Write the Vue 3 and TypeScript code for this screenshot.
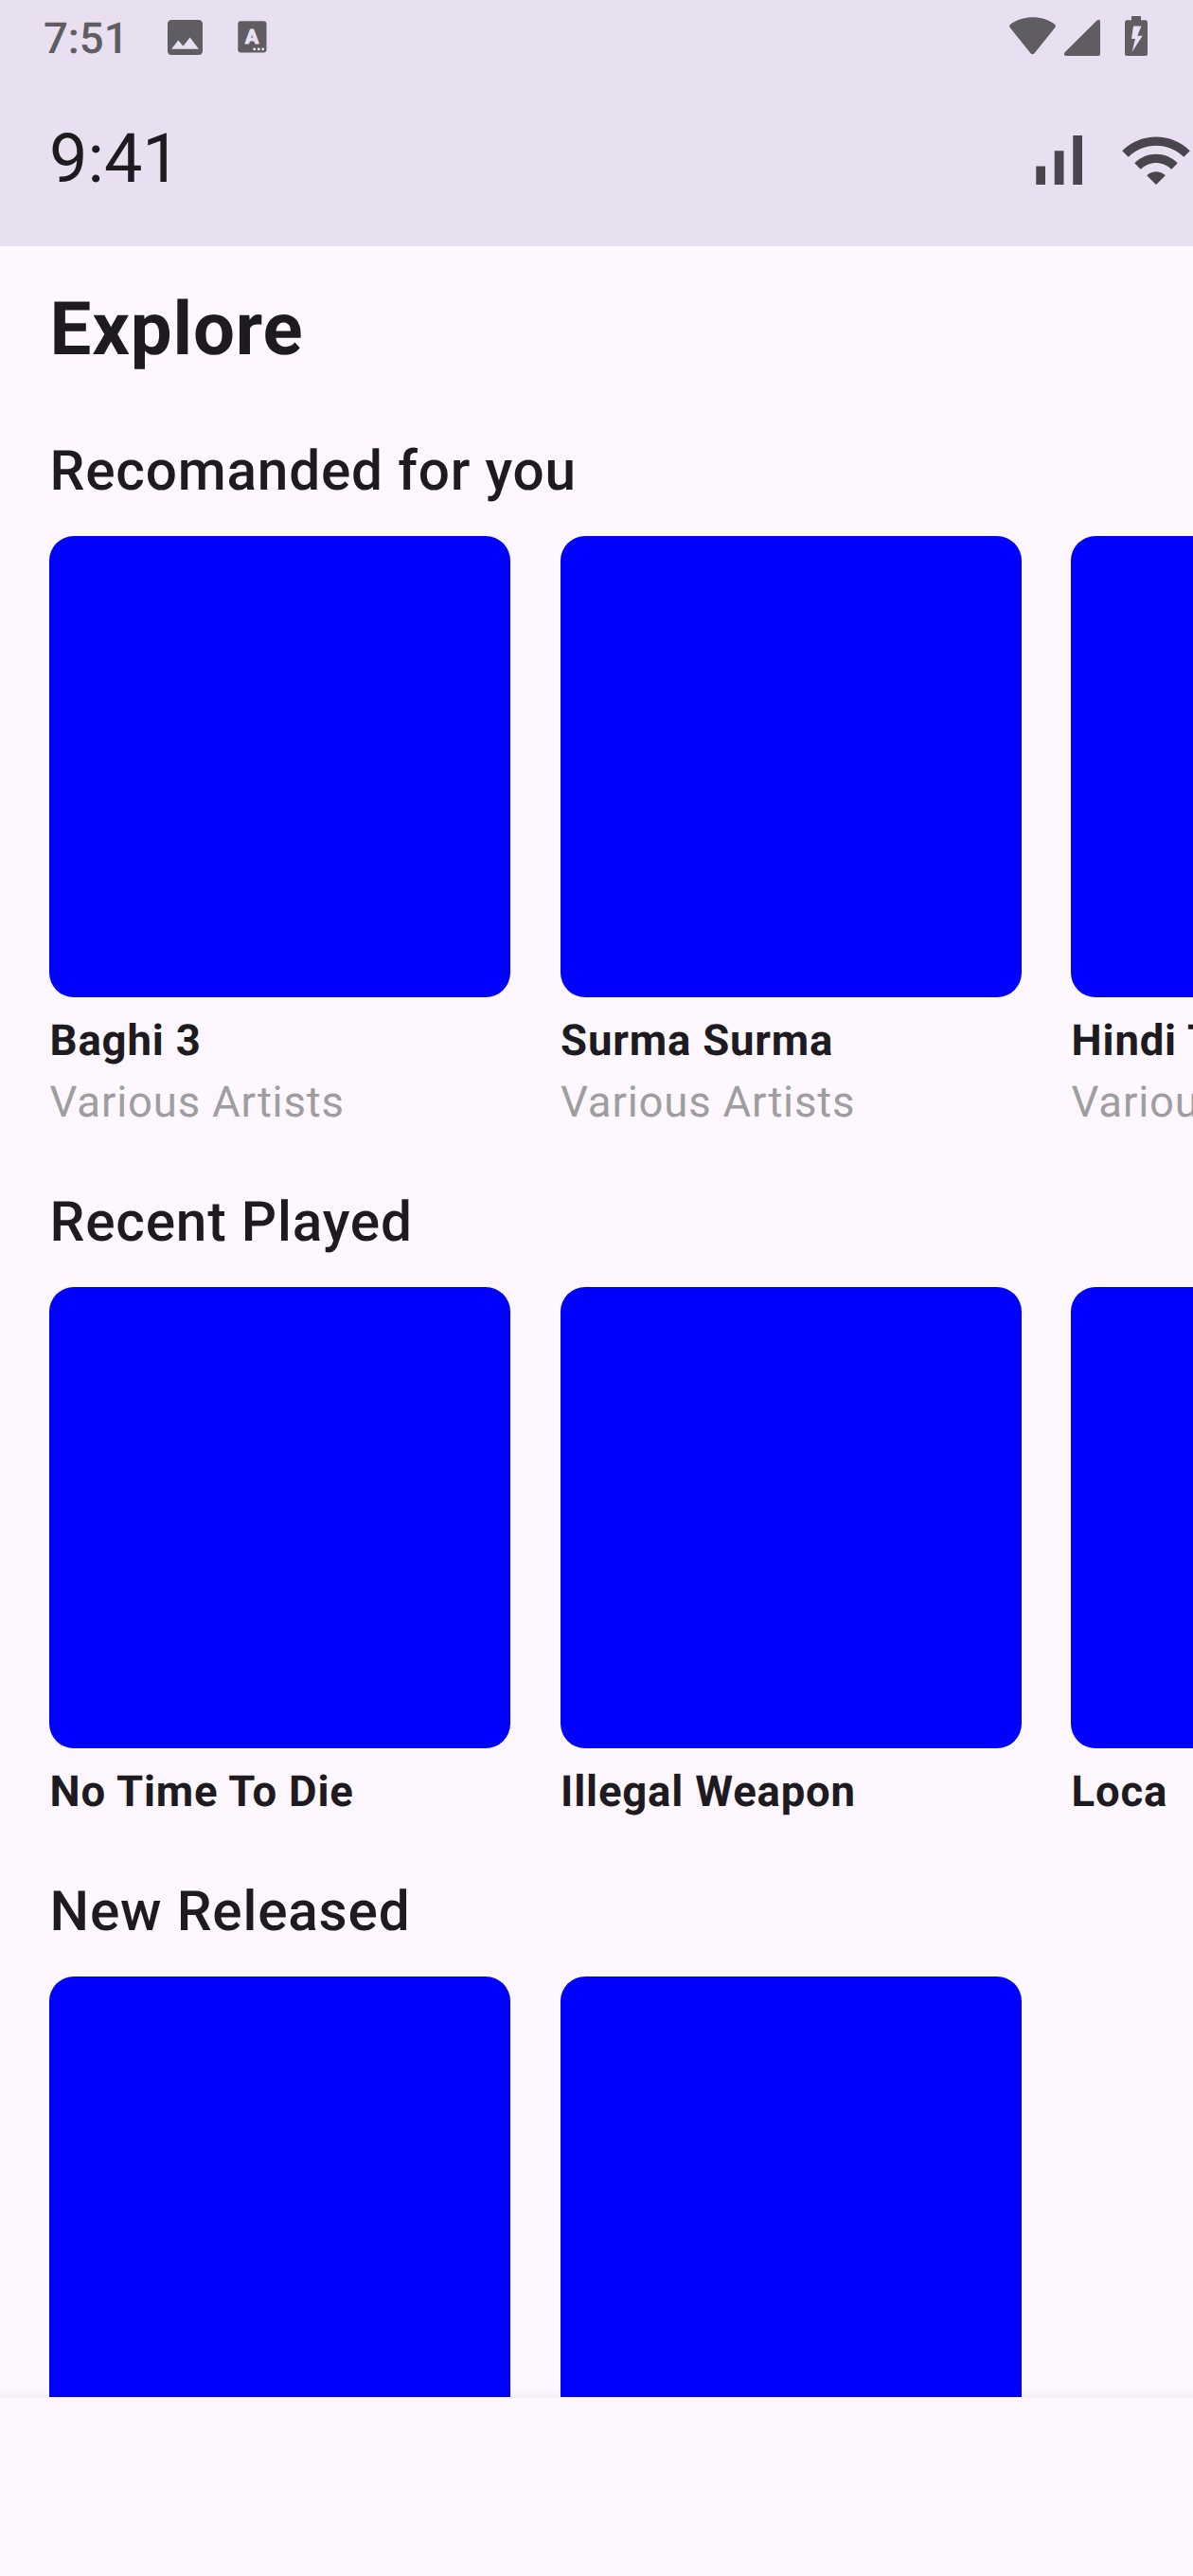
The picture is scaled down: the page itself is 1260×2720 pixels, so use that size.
<script setup lang="ts">
interface Track {
  title: string
  artist?: string
}

interface Section {
  heading: string
  tracks: Track[]
}

const sections: Section[] = [
  {
    heading: 'Recomanded for you',
    tracks: [
      { title: 'Baghi 3', artist: 'Various Artists' },
      { title: 'Surma Surma', artist: 'Various Artists' },
      { title: 'Hindi T', artist: 'Various Artists' },
    ],
  },
  {
    heading: 'Recent Played',
    tracks: [{ title: 'No Time To Die' }, { title: 'Illegal Weapon' }, { title: 'Loca' }],
  },
  {
    heading: 'New Released',
    tracks: [{ title: '' }, { title: '' }],
  },
]
</script>

<template>
  <div class="screen">
    <header class="top">
      <div class="system">
        <span class="system-time">7:51</span>
        <svg class="image-icon" width="37" height="37" viewBox="3 3 18 18">
          <path d="M21 19V5c0-1.100-.9-2-2-2H5c-1.100 0-2 .9-2 2v14c0 1.100.9 2 2 2h14c1.100 0 2-.9 2-2zM8.500 13.500l2.500 3.010L14.500 12l4.500 6H5l3.500-4.500z" />
        </svg>
        <svg class="letter-icon" width="31" height="34" viewBox="0 0 31 34">
          <rect x="0.300" y="0.200" width="30.200" height="33.300" rx="3.200" />
          <text x="15.100" y="24.200" text-anchor="middle">A</text>
          <g class="dots">
            <rect x="16.300" y="28.400" width="2.800" height="2.800" rx="1" />
            <rect x="20.800" y="28.400" width="2.800" height="2.800" rx="1" />
            <rect x="25.300" y="28.400" width="2.800" height="2.800" rx="1" />
          </g>
        </svg>
        <span class="spacer"></span>
        <svg class="sys-icons" width="150" height="48" viewBox="1064 14 150 48">
          <path d="M1067 29.500Q1065 27 1067.500 25.200C1081 15.800 1101 15.800 1113.500 25.200Q1116 27 1114 29.500L1092.500 56.200Q1090.500 58.500 1088.500 56.200Z" />
          <path d="M1124.600 55.200L1158.600 21.600Q1162 19.500 1162 23V57Q1162 59 1160 59H1126.200Q1122.600 58.500 1124.600 55.200Z" />
          <path fill-rule="evenodd" d="M1195 17H1205V21.300H1209.500Q1212 21.300 1212 23.800V56.500Q1212 59 1209.500 59H1190.500Q1188 59 1188 56.500V23.800Q1188 21.300 1190.500 21.300H1195ZM1197 27.500L1195 41H1199L1195.500 55L1206.700 37.800H1201.300L1205.500 27.500Z" />
        </svg>
      </div>
      <div class="appbar">
        <span class="clock">9:41</span>
        <div class="appbar-icons">
          <svg width="78" height="78" viewBox="0 0 24 24">
            <path d="M17 4h3v16h-3zM5 14h3v6H5zM11 9h3v11h-3z" />
          </svg>
          <svg width="78" height="78" viewBox="0 0 24 24">
            <path d="M1 9l2 2c4.970-4.970 13.030-4.970 18 0l2-2C16.930 2.930 7.080 2.930 1 9zm8 8l3 3 3-3c-1.650-1.660-4.340-1.660-6 0zm-4-4l2 2c2.760-2.760 7.240-2.760 10 0l2-2C15.140 9.140 8.870 9.140 5 13z" />
          </svg>
        </div>
      </div>
    </header>

    <main class="content">
      <h1>Explore</h1>
      <section v-for="section in sections" :key="section.heading">
        <h2>{{ section.heading }}</h2>
        <div class="row">
          <article v-for="(track, i) in section.tracks" :key="i" class="track">
            <div class="cover"></div>
            <p class="title">{{ track.title }}</p>
            <p v-if="track.artist" class="artist">{{ track.artist }}</p>
          </article>
        </div>
      </section>
    </main>

    <footer class="bottom-bar"></footer>
  </div>
</template>

<style>
body {
  background: #fef7ff;
}
</style>

<style scoped>
.screen {
  width: 1260px;
  height: 2720px;
  display: flex;
  flex-direction: column;
  overflow: hidden;
  background: #fef7ff;
  color: #1d1b20;
  font-family: Roboto, sans-serif;
  text-rendering: geometricPrecision;
}

.top {
  flex: none;
  height: 260px;
  background: #e8dff0;
}

.system {
  display: flex;
  align-items: flex-start;
  height: 78px;
  padding: 0 46px;
  fill: #5f5c62;
  color: #5f5c62;
}

.system-time {
  width: 130.500px;
  margin-top: 15px;
  font-size: 45.500px;
  font-weight: 500;
  line-height: 54px;
}

.image-icon {
  margin-top: 20.500px;
}

.letter-icon {
  margin: 22px 0 0 37.800px;
}

.letter-icon text {
  fill: #e8dff0;
  stroke: #e8dff0;
  stroke-width: 1.200;
  stroke-linejoin: round;
  font-size: 21px;
  font-weight: 700;
}

.letter-icon .dots {
  fill: #e8dff0;
}

.spacer {
  flex: 1;
}

.sys-icons {
  margin-top: 14px;
}

.appbar {
  display: flex;
  justify-content: space-between;
  align-items: center;
  height: 182px;
  padding: 0 0 0 52px;
}

.clock {
  font-size: 72px;
  line-height: 91px;
  margin-top: -3px;
}

.appbar-icons {
  display: flex;
  gap: 26px;
  fill: #49454f;
}

.content {
  flex: none;
  height: 2271px;
  padding: 33px 0 0 52px;
  box-sizing: border-box;
  overflow: hidden;
}

h1,
h2,
p {
  margin: 0;
  white-space: nowrap;
  text-indent: 0.600px;
}

h1 {
  font-size: 78px;
  font-weight: 700;
  line-height: 112px;
  letter-spacing: 0.810px;
  margin-bottom: 50.500px;
}

section {
  margin-bottom: 51.500px;
}

h2 {
  font-size: 58.500px;
  font-weight: 500;
  line-height: 84px;
  letter-spacing: 0.810px;
  margin-bottom: 26.500px;
}

.row {
  display: flex;
  gap: 52px;
}

.track {
  flex: none;
  width: 487.500px;
}

.cover {
  width: 487.300px;
  height: 487px;
  margin-bottom: 14px;
  border-radius: 26px;
  background: #0000ff;
}

.title,
.artist {
  height: 65px;
  font-size: 45.500px;
  line-height: 65px;
  letter-spacing: 0.810px;
}

.title {
  font-weight: 700;
}

.artist {
  color: #9e9e9e;
}

.bottom-bar {
  position: relative;
  flex: 1;
  margin: 0 -20px;
  border-top: 1px solid rgba(246, 240, 247, 0.500);
  background: #fef7ff;
  background-clip: padding-box;
  box-shadow: 0 0 9px rgba(0, 0, 0, 0.080);
}
</style>
